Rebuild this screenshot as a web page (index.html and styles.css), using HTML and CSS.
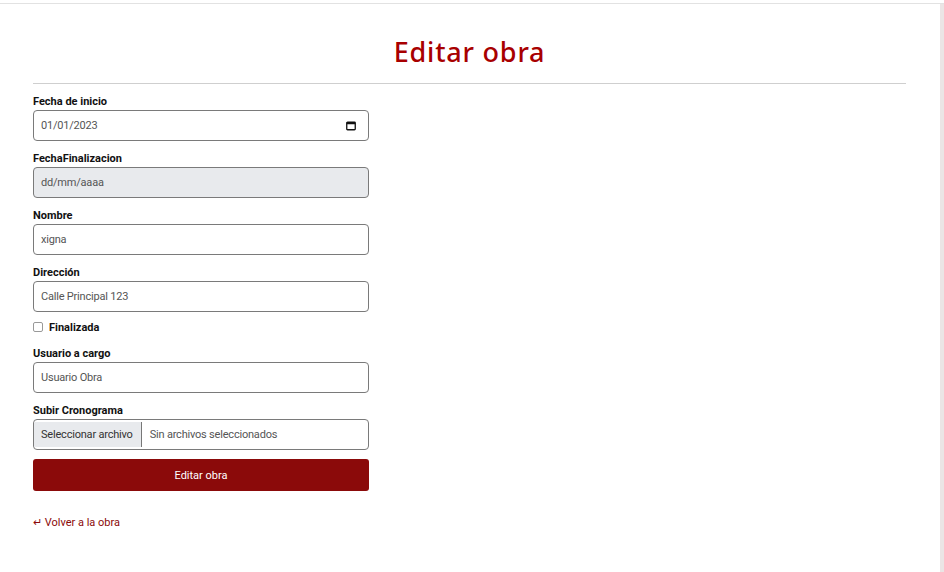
FILE: index.html
```html
<!DOCTYPE html>
<html lang="es">
<head>
<meta charset="utf-8">
<title>Editar obra</title>
<link rel="stylesheet" href="styles.css">
</head>
<body>
<div class="topline"></div>
<div class="frame">
  <main class="page">
    <h1 class="title">Editar obra</h1>
    <hr class="rule">
    <form class="form">
      <div class="group">
        <label class="label">Fecha de inicio</label>
        <div class="input date">
          <span>01/01/2023</span>
          <svg class="cal" width="10" height="10" viewBox="0 0 10 10"><rect x="0.75" y="1.25" width="8.5" height="7.5" rx="0.8" fill="none" stroke="#111" stroke-width="1.3"/><rect x="0.75" y="1.25" width="8.5" height="2" fill="#111"/></svg>
        </div>
      </div>
      <div class="group">
        <label class="label">FechaFinalizacion</label>
        <div class="input disabled"><span>dd/mm/aaaa</span></div>
      </div>
      <div class="group">
        <label class="label">Nombre</label>
        <div class="input"><span>xigna</span></div>
      </div>
      <div class="group">
        <label class="label">Dirección</label>
        <div class="input"><span>Calle Principal 123</span></div>
      </div>
      <div class="check-row">
        <span class="checkbox"></span>
        <span class="check-label">Finalizada</span>
      </div>
      <div class="group">
        <label class="label">Usuario a cargo</label>
        <div class="input"><span>Usuario Obra</span></div>
      </div>
      <div class="group">
        <label class="label">Subir Cronograma</label>
        <div class="input file">
          <span class="file-btn">Seleccionar archivo</span>
          <span class="file-name">Sin archivos seleccionados</span>
        </div>
      </div>
      <button type="button" class="submit">Editar obra</button>
    </form>
    <a class="back" href="#">↵ Volver a la obra</a>
  </main>
  <div class="strip"></div>
</div>
</body>
</html>
```

FILE: styles.css
```css
html, body {
  margin: 0;
  padding: 0;
  background: #fff;
}
body {
  font-family: "Roboto", "Noto Sans", sans-serif;
  color: #212529;
  padding-top: 3px;
}
.topline {
  height: 1px;
  background: #e2e2e2;
}
.frame {
  display: flex;
  height: 568px;
}
.page {
  flex: 1;
  padding: 0 34px 0 33px;
}
.strip {
  width: 4px;
  background: #ebe5e5;
}
.title {
  margin: 0;
  padding-top: 30px;
  height: 42px;
  line-height: 36px;
  text-align: center;
  font-family: "Noto Sans", sans-serif;
  font-size: 27px;
  font-weight: 500;
  color: #a80000;
  letter-spacing: 0.8px;
}
.rule {
  margin: 7px 0 10px;
  border: 0;
  border-top: 1px solid #cfcfcf;
}
.form {
  width: 336px;
  display: flex;
  flex-direction: column;
}
.group {
  display: flex;
  flex-direction: column;
  margin-bottom: 10px;
}
.label {
  font-size: 11px;
  font-weight: 700;
  line-height: 16px;
  color: #111;
}
.input {
  box-sizing: border-box;
  height: 31px;
  border: 1px solid #7a7a7a;
  border-radius: 4px;
  display: flex;
  align-items: center;
  padding: 0 12px 0 7px;
  font-size: 11px;
  letter-spacing: -0.2px;
  color: #555;
  background: #fff;
}
.date {
  justify-content: space-between;
}
.cal {
  display: block;
}
.disabled {
  background: #e8eaed;
}
.file {
  padding: 0;
  overflow: hidden;
}
.file-btn {
  align-self: stretch;
  display: flex;
  align-items: center;
  padding: 0 8px 0 7px;
  background: #e8eaed;
  border-right: 1px solid #777;
  color: #333;
  margin: 2px 0;
}
.file-name {
  padding-left: 8px;
}
.check-row {
  display: flex;
  align-items: center;
  height: 16px;
  margin: -3px 0 11px;
}
.checkbox {
  box-sizing: border-box;
  width: 10px;
  height: 10px;
  border: 1px solid #999;
  border-radius: 2px;
  margin-right: 6px;
}
.check-label {
  font-size: 11px;
  font-weight: 700;
  color: #111;
}
.submit {
  height: 32px;
  margin-top: -1px;
  border: 0;
  border-radius: 3px;
  background: #8b0a0a;
  color: #fff;
  font-family: inherit;
  font-size: 11px;
}
.back {
  display: inline-block;
  margin-top: 24px;
  line-height: 16px;
  font-size: 11px;
  color: #8b0a0a;
  text-decoration: none;
}
```
